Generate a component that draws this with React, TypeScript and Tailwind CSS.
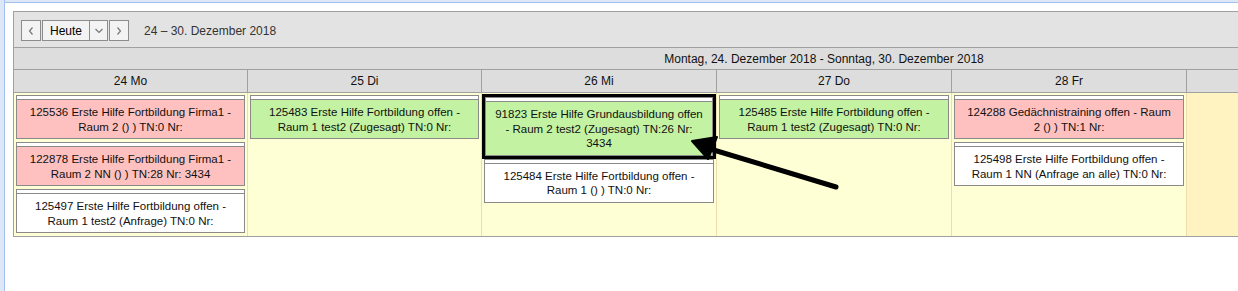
import React from 'react';

type Ev = { lines: string[]; color: 'red' | 'green' | 'white'; selected?: boolean };

// weekend columns run off the right edge, their labels are never visible
const days: { label: string; w: string; events: Ev[]; weekend?: boolean }[] = [
  {
    label: '24 Mo',
    w: 'w-[234px]',
    events: [
      { color: 'red', lines: ['125536 Erste Hilfe Fortbildung Firma1 -', 'Raum 2 () ) TN:0 Nr:'] },
      { color: 'red', lines: ['122878 Erste Hilfe Fortbildung Firma1 -', 'Raum 2 NN () ) TN:28 Nr: 3434'] },
      { color: 'white', lines: ['125497 Erste Hilfe Fortbildung offen -', 'Raum 1 test2 (Anfrage) TN:0 Nr:'] },
    ],
  },
  {
    label: '25 Di',
    w: 'w-[234px]',
    events: [{ color: 'green', lines: ['125483 Erste Hilfe Fortbildung offen -', 'Raum 1 test2 (Zugesagt) TN:0 Nr:'] }],
  },
  {
    label: '26 Mi',
    w: 'w-[235px]',
    events: [
      {
        color: 'green',
        selected: true,
        lines: ['91823 Erste Hilfe Grundausbildung offen', '- Raum 2 test2 (Zugesagt) TN:26 Nr:', '3434'],
      },
      { color: 'white', lines: ['125484 Erste Hilfe Fortbildung offen -', 'Raum 1 () ) TN:0 Nr:'] },
    ],
  },
  {
    label: '27 Do',
    w: 'w-[235px]',
    events: [{ color: 'green', lines: ['125485 Erste Hilfe Fortbildung offen -', 'Raum 1 test2 (Zugesagt) TN:0 Nr:'] }],
  },
  {
    label: '28 Fr',
    w: 'w-[235px]',
    events: [
      { color: 'red', lines: ['124288 Gedächnistraining offen - Raum', '2 () ) TN:1 Nr:'] },
      { color: 'white', lines: ['125498 Erste Hilfe Fortbildung offen -', 'Raum 1 NN (Anfrage an alle) TN:0 Nr:'] },
    ],
  },
  { label: '', w: 'w-[224px]', events: [], weekend: true },
  { label: '', w: 'w-[224px]', events: [], weekend: true },
];

function EventBox({ ev }: { ev: Ev }) {
  const bg = ev.color === 'red' ? 'bg-[#ffc1bf]' : ev.color === 'green' ? 'bg-[#c3f2a2]' : 'bg-white';
  return (
    <div className={ev.selected ? '-mt-[1px] border-[3px] border-black' : 'mx-[2px] mb-[3px]'}>
      <div className="border border-[#8a8a8a]">
        <div className="h-[4px] bg-white border-b border-[#8a8a8a]" />
        <div className={`${bg} pt-[5px] pb-[4px] px-1 text-center leading-[14.5px] text-[11.5px] text-[#111]`}>
          {ev.lines.map((l, i) => (
            <div key={i} className="whitespace-nowrap">{l}</div>
          ))}
        </div>
      </div>
    </div>
  );
}

function ToolBtn({ children, className = '' }: { children: React.ReactNode; className?: string }) {
  return (
    <div
      className={`h-[21px] flex items-center justify-center border border-[#8c8c8c] bg-[#f3f3f3] text-[12px] text-black ${className}`}
    >
      {children}
    </div>
  );
}

export default function App() {
  return (
    <div
      className="relative w-[1238px] h-[291px] overflow-hidden bg-white flex"
      style={{ fontFamily: '"Liberation Sans", Arial, sans-serif' }}
    >
      <div className="w-[5px] shrink-0 bg-[#dce7f7] border-r border-[#a3c1ec]" />
      <div className="flex-1 flex flex-col min-w-0 overflow-hidden">
        <div className="h-[3px] shrink-0 bg-[#dce7f7] border-b border-[#a3c1ec]" />
        <div className="pl-[8px] pt-[8px]">
          <div className="w-[1622px] border border-[#a0a0a0]">
            {/* toolbar */}
            <div className="h-[36px] bg-[#e3e3e3] border-b border-[#a0a0a0] flex items-center pl-[7px] pt-[2px]">
              <ToolBtn className="w-[20px]">
                <svg width="8" height="10" viewBox="0 0 8 10">
                  <path d="M5.5 1.5 L2.5 5 L5.5 8.5" fill="none" stroke="#777" strokeWidth="1.2" />
                </svg>
              </ToolBtn>
              <ToolBtn className="ml-[1px] w-[48px]">Heute</ToolBtn>
              <ToolBtn className="-ml-[1px] w-[19px]">
                <svg width="10" height="8" viewBox="0 0 10 8">
                  <path d="M1.5 2 L5 5.5 L8.5 2" fill="none" stroke="#777" strokeWidth="1.2" />
                </svg>
              </ToolBtn>
              <ToolBtn className="ml-[1px] w-[20px]">
                <svg width="8" height="10" viewBox="0 0 8 10">
                  <path d="M2.5 1.5 L5.5 5 L2.5 8.5" fill="none" stroke="#777" strokeWidth="1.2" />
                </svg>
              </ToolBtn>
              <span className="ml-[15px] text-[12px] text-[#333]">24 – 30. Dezember 2018</span>
            </div>
            {/* range header */}
            <div className="h-[22px] bg-[#dddddd] border-b border-[#a0a0a0] flex items-center justify-center pt-[1px] text-[12px] text-[#111]">
              Montag, 24. Dezember 2018 - Sonntag, 30. Dezember 2018
            </div>
            {/* day header */}
            <div className="h-[23px] bg-[#dddddd] border-b border-[#a0a0a0] flex">
              {days.map((d, i) => (
                <div
                  key={i}
                  className={`${d.w} shrink-0 border-r border-[#a0a0a0] flex items-center justify-center text-[12px] text-[#111]`}
                >
                  {d.label}
                </div>
              ))}
            </div>
            {/* body */}
            <div className="h-[143px] flex">
              {days.map((d, i) => (
                <div
                  key={i}
                  className={`${d.w} ${d.weekend ? 'bg-[#fff4c1]' : 'bg-[#ffffd5]'} shrink-0 border-r border-[#f1dcae] pt-[2px]`}
                >
                  {d.events.map((ev, j) => (
                    <EventBox key={j} ev={ev} />
                  ))}
                </div>
              ))}
            </div>
          </div>
        </div>
      </div>
      {/* hand-drawn arrow */}
      <svg className="absolute left-0 top-0 pointer-events-none" width="1238" height="291">
        <path d="M836 187 L707 148" stroke="#000" strokeWidth="5" strokeLinecap="round" fill="none" />
        <polygon points="692,141 717,137 708,159" fill="#000" stroke="#000" strokeWidth="2" strokeLinejoin="round" />
      </svg>
    </div>
  );
}
